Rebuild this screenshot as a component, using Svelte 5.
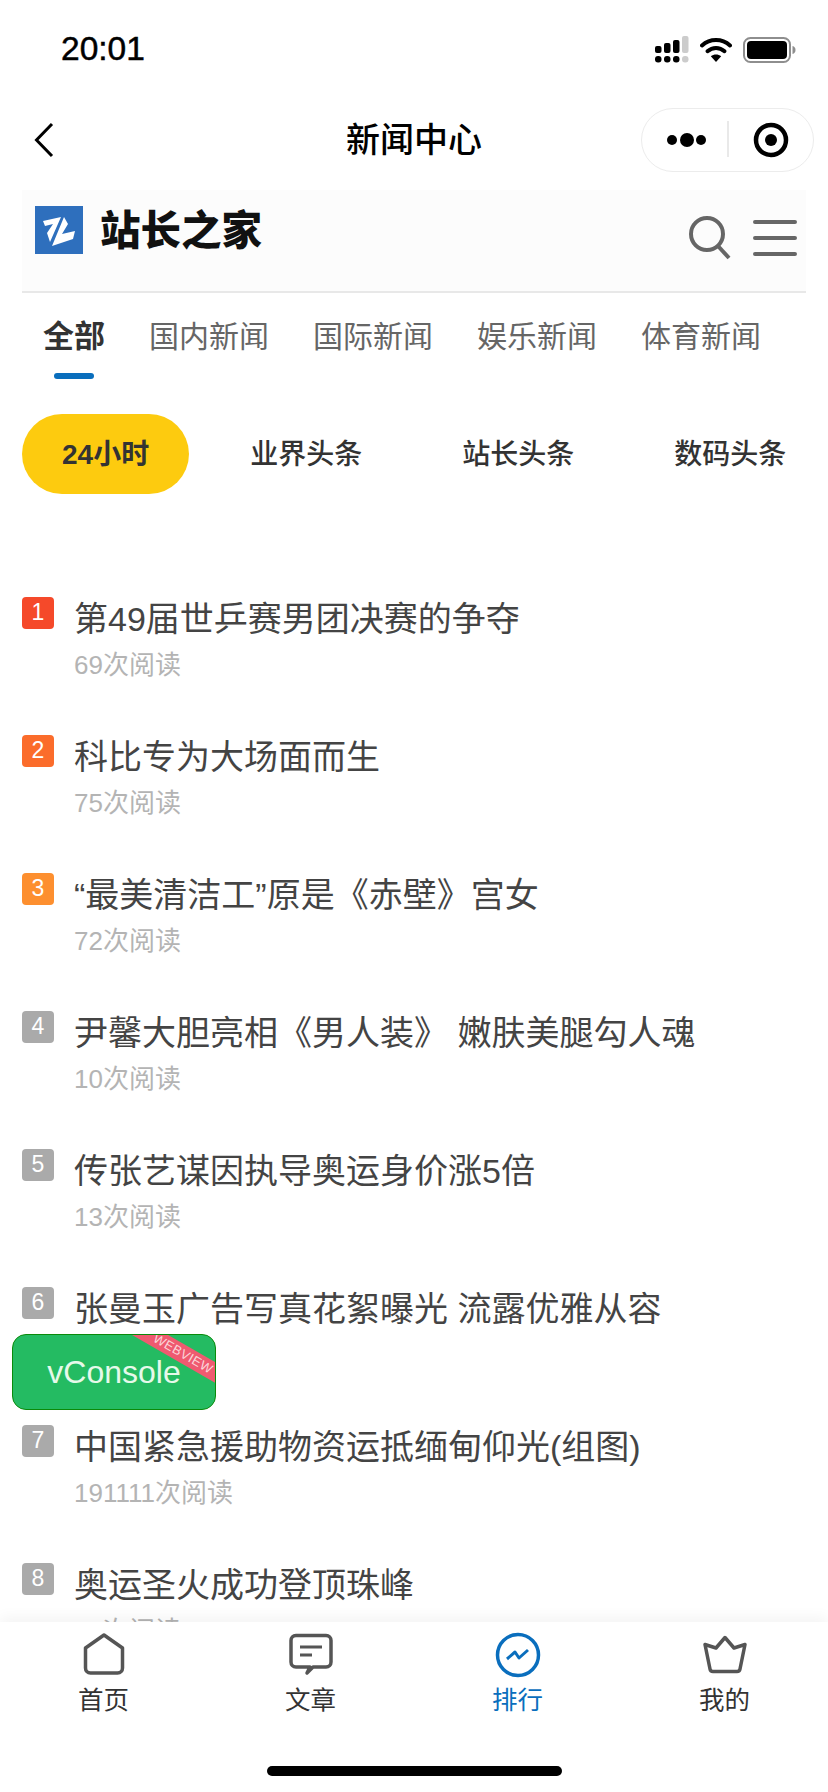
<script>
    const tabs = ["全部", "国内新闻", "国际新闻", "娱乐新闻", "体育新闻"];
    const pills = ["24小时", "业界头条", "站长头条", "数码头条"];

    const news = [
        { title: "第49届世乒赛男团决赛的争夺", reads: 69, color: "#f5492a" },
        { title: "科比专为大场面而生", reads: 75, color: "#fb6c2b" },
        { title: "“最美清洁工”原是《赤壁》宫女", reads: 72, color: "#fd8f2f" },
        { title: "尹馨大胆亮相《男人装》 嫩肤美腿勾人魂", reads: 10, color: "#aaa" },
        { title: "传张艺谋因执导奥运身价涨5倍", reads: 13, color: "#aaa" },
        { title: "张曼玉广告写真花絮曝光 流露优雅从容", reads: 44, color: "#aaa" },
        { title: "中国紧急援助物资运抵缅甸仰光(组图)", reads: 191111, color: "#aaa" },
        { title: "奥运圣火成功登顶珠峰", reads: 31, color: "#aaa" }
    ];

    const bars = [
        { x: 0, y: 10, h: 7, c: "#000" },
        { x: 9, y: 7, h: 10, c: "#000" },
        { x: 18, y: 4, h: 13, c: "#000" },
        { x: 27, y: 0, h: 17, c: "#ccc" }
    ];
</script>

<div class="page">
    <div class="status">
        <span class="time">20:01</span>
        <div class="status-icons">
            <svg width="34" height="27" viewBox="0 0 34 27">
                {#each bars as b}
                    <rect x={b.x} y={b.y} width="6.5" height={b.h} rx="2" fill={b.c} />
                    <rect x={b.x} y="20" width="6.5" height="6.5" rx="3" fill={b.c} />
                {/each}
            </svg>
            <svg width="32" height="25" viewBox="0 0 32 25">
                <path d="M2 8.5C10 1.2 22 1.2 30 8.5" fill="none" stroke="#000" stroke-width="4" stroke-linecap="round" />
                <path d="M7.5 14.2C12.5 9.8 19.5 9.8 24.5 14.2" fill="none" stroke="#000" stroke-width="4" stroke-linecap="round" />
                <path d="M16 25L10.8 19.3C13.8 16.8 18.2 16.8 21.2 19.3Z" fill="#000" />
            </svg>
            <svg width="53" height="26" viewBox="0 0 53 26">
                <rect x="1" y="1" width="46" height="24" rx="6.5" fill="none" stroke="#8e8e8e" stroke-width="2" />
                <rect x="4" y="4" width="40" height="18" rx="4" fill="#000" />
                <path d="M49.5 9C51.5 9.6 52.5 11 52.5 13C52.5 15 51.5 16.4 49.5 17Z" fill="#8e8e8e" />
            </svg>
        </div>
    </div>

    <div class="nav">
        <svg class="back" width="20" height="36" viewBox="0 0 20 36">
            <path d="M18 2L2.5 18L18 34" fill="none" stroke="#000" stroke-width="3" />
        </svg>
        <span class="nav-title">新闻中心</span>
        <div class="capsule">
            <svg width="173" height="64" viewBox="0 0 173 64">
                <circle cx="31" cy="32" r="5" fill="#000" />
                <circle cx="46" cy="32" r="7" fill="#000" />
                <circle cx="60" cy="32" r="5" fill="#000" />
                <path d="M87 13V49" stroke="#e2e2e2" stroke-width="1.5" />
                <circle cx="130" cy="32" r="15" fill="none" stroke="#000" stroke-width="4.5" />
                <circle cx="130" cy="32" r="6" fill="#000" />
            </svg>
        </div>
    </div>

    <header class="brand">
        <div class="logo">
            <svg width="48" height="48" viewBox="0 0 48 48">
                <rect width="48" height="48" fill="#2e6fbd" />
                <path d="M8 15L26 11L15 36L12 27L18 18L10 20Z" fill="#fff" />
                <path d="M29 11L33 18L27 28L40 25L38 33L17 40Z" fill="#fff" />
            </svg>
            <span class="logo-text">站长之家</span>
        </div>
        <div class="brand-icons">
            <svg width="42" height="44" viewBox="0 0 42 44">
                <circle cx="18" cy="18" r="16" fill="none" stroke="#666" stroke-width="4" />
                <path d="M29 30L40 42" stroke="#666" stroke-width="4" />
            </svg>
            <svg width="44" height="36" viewBox="0 0 44 36">
                <path d="M2 2H42M2 18H42M2 34H42" stroke="#666" stroke-width="4" stroke-linecap="round" />
            </svg>
        </div>
    </header>

    <nav class="tabs">
        {#each tabs as tab, i}
            <span class="tab" class:active={i === 0}>{tab}</span>
        {/each}
    </nav>

    <div class="pills">
        {#each pills as pill, i}
            <span class="pill" class:on={i === 0}>{pill}</span>
        {/each}
    </div>

    <main class="list">
        {#each news as item, i}
            <div class="row">
                <span class="rank" style="background: {item.color}">{i + 1}</span>
                <div class="row-body">
                    <div class="row-title">{item.title}</div>
                    <div class="row-reads">{item.reads}次阅读</div>
                </div>
            </div>
        {/each}
    </main>

    <footer class="tabbar">
        <div class="tabbar-items">
            <div class="tabbar-item">
                <svg width="46" height="46" viewBox="0 0 46 46">
                    <path d="M23 3L41.5 16V36C41.5 39 39.5 41 36.5 41H9.5C6.5 41 4.5 39 4.5 36V16Z" fill="none" stroke="#555" stroke-width="3.5" stroke-linejoin="round" />
                </svg>
                <span>首页</span>
            </div>
            <div class="tabbar-item">
                <svg width="46" height="46" viewBox="0 0 46 46">
                    <path d="M8 3.5H38C41 3.5 43 5.5 43 8.5V30C43 33 41 35 38 35H25L19 41L22 35H8C5 35 3 33 3 30V8.5C3 5.5 5 3.5 8 3.5Z" fill="none" stroke="#555" stroke-width="3.5" stroke-linejoin="round" />
                    <path d="M12 15H34M12 23H24" stroke="#555" stroke-width="3" />
                </svg>
                <span>文章</span>
            </div>
            <div class="tabbar-item current">
                <svg width="46" height="46" viewBox="0 0 46 46">
                    <circle cx="23" cy="23" r="20.5" fill="none" stroke="#0a6ebd" stroke-width="3.5" />
                    <path d="M12 27L20 20L24 26L33 18" fill="none" stroke="#0a6ebd" stroke-width="3" stroke-linejoin="round" />
                </svg>
                <span>排行</span>
            </div>
            <div class="tabbar-item">
                <svg width="46" height="46" viewBox="0 0 46 46">
                    <path d="M23 5.5L32 16L43 12.5L38 37Q37.6 39.5 35 39.5H11Q8.4 39.5 8 37L3 12.5L14 16Z" fill="none" stroke="#555" stroke-width="3.5" stroke-linejoin="round" />
                </svg>
                <span>我的</span>
            </div>
        </div>
        <div class="home-bar"></div>
    </footer>

    <div class="vconsole">
        vConsole
        <div class="ribbon">WEBVIEW</div>
    </div>
</div>

<style>
    :global(body) {
        background: #fff;
    }

    .page {
        position: relative;
        display: flex;
        flex-direction: column;
        width: 828px;
        height: 1792px;
        overflow: hidden;
        background: #fff;
        font-family: "Liberation Sans", "Noto Sans CJK SC", sans-serif;
    }

    .status {
        display: flex;
        align-items: center;
        justify-content: space-between;
        height: 96px;
        padding: 2px 32px 0 61px;
        box-sizing: border-box;
        flex: none;
    }

    .time {
        font-size: 33.5px;
        font-weight: 500;
        color: #000;
        -webkit-text-stroke: 0.5px #000;
    }

    .status-icons {
        display: flex;
        align-items: center;
        gap: 11px;
        margin-top: 1px;
    }

    .nav {
        position: relative;
        display: flex;
        align-items: center;
        justify-content: space-between;
        height: 88px;
        padding: 0 14px 0 34px;
        flex: none;
    }

    .nav-title {
        position: absolute;
        left: 0;
        right: 0;
        top: 22px;
        line-height: 44px;
        text-align: center;
        font-size: 34px;
        font-weight: 500;
        color: #000;
    }

    .capsule {
        display: flex;
        width: 173px;
        height: 64px;
        border: 1px solid #ececec;
        border-radius: 32px;
        box-sizing: border-box;
    }

    .capsule svg {
        margin: -1px;
    }

    .brand {
        display: flex;
        align-items: center;
        justify-content: space-between;
        height: 103px;
        margin: 6px 22px 0;
        padding: 0 9px 0 13px;
        background: #fcfcfc;
        border-bottom: 2px solid #e8e8e8;
        box-sizing: border-box;
        flex: none;
    }

    .logo {
        display: flex;
        align-items: center;
        gap: 17px;
        margin-top: -22px;
    }

    .logo-text {
        font-size: 40.5px;
        line-height: 48px;
        margin-top: 2px;
        font-weight: 900;
        color: #111;
    }

    .brand-icons {
        display: flex;
        align-items: center;
        gap: 22px;
        margin-top: -5px;
    }

    .tabs {
        display: flex;
        gap: 44px;
        padding: 18px 0 0 43px;
        height: 103px;
        box-sizing: border-box;
        flex: none;
    }

    .tab {
        position: relative;
        height: 52px;
        line-height: 52px;
        font-size: 30px;
        color: #666;
    }

    .tab.active {
        font-size: 31px;
        font-weight: 700;
        color: #333;
    }

    .tab.active::after {
        content: "";
        position: absolute;
        left: 11px;
        top: 62px;
        width: 40px;
        height: 6px;
        border-radius: 3px;
        background: #0a6ebd;
    }

    .pills {
        display: flex;
        gap: 22px;
        margin-top: 18px;
        padding-left: 22px;
        white-space: nowrap;
        flex: none;
    }

    .pill {
        height: 80px;
        line-height: 82px;
        padding: 0 39px;
        border-radius: 40px;
        font-size: 28px;
        font-weight: 500;
        color: #333;
    }

    .pill.on {
        background: #fdcb0f;
        padding: 0 40px;
        font-weight: 700;
    }

    .list {
        flex: 1;
        min-height: 0;
        overflow: hidden;
        padding: 102px 0 0 22px;
    }

    .row {
        display: flex;
        gap: 20px;
        height: 138px;
    }

    .rank {
        width: 32px;
        height: 32px;
        margin-top: 1px;
        border-radius: 4px;
        text-align: center;
        line-height: 30px;
        font-size: 23px;
        color: #fff;
        flex: none;
    }

    .row-title {
        height: 46px;
        line-height: 46px;
        font-size: 34px;
        color: #444;
        white-space: nowrap;
    }

    .row-reads {
        height: 46px;
        line-height: 46px;
        font-size: 26px;
        color: #b4b4b4;
    }

    .tabbar {
        position: relative;
        height: 170px;
        background: #fff;
        box-shadow: 0 -4px 14px rgba(0, 0, 0, 0.05);
        flex: none;
    }

    .tabbar-items {
        display: grid;
        grid-template-columns: repeat(4, 207px);
        padding-top: 10px;
    }

    .tabbar-item {
        display: flex;
        flex-direction: column;
        align-items: center;
        font-size: 25.5px;
        line-height: 44px;
        color: #333;
    }

    .tabbar-item.current {
        color: #0a6ebd;
    }

    .home-bar {
        width: 295px;
        height: 10px;
        margin: 44px auto 0;
        border-radius: 5px;
        background: #000;
    }

    .vconsole {
        position: absolute;
        left: 12px;
        top: 1334px;
        width: 204px;
        height: 76px;
        box-sizing: border-box;
        border: 1.5px solid #0a8a0a;
        border-radius: 14px;
        background: #24bb62;
        overflow: hidden;
        text-align: center;
        line-height: 74px;
        font-size: 32px;
        color: #e6f9ea;
    }

    .ribbon {
        position: absolute;
        top: 10px;
        right: -33px;
        width: 130px;
        height: 18px;
        line-height: 18px;
        transform: rotate(30deg);
        background: #ef5a70;
        font-size: 13px;
        letter-spacing: 0.5px;
        color: #fbd5da;
    }
</style>
